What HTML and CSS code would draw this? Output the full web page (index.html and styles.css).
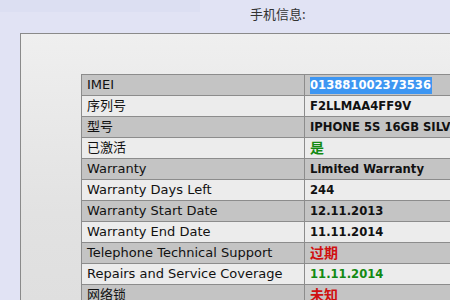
FILE: index.html
```html
<!DOCTYPE html>
<html>
<head>
<meta charset="utf-8">
<link rel="stylesheet" href="styles.css">
</head>
<body>
<div class="page">
  <div class="topband"></div>
  <div class="title">手机信息:</div>
  <div class="panel">
    <table class="info">
      <tr class="dark"><td class="k">IMEI</td><td class="v"><span class="sel">013881002373536</span></td></tr>
      <tr class="light"><td class="k">序列号</td><td class="v">F2LLMAA4FF9V</td></tr>
      <tr class="dark"><td class="k">型号</td><td class="v">IPHONE 5S 16GB SILVER</td></tr>
      <tr class="light"><td class="k">已激活</td><td class="v green cjk">是</td></tr>
      <tr class="dark"><td class="k">Warranty</td><td class="v">Limited Warranty</td></tr>
      <tr class="light"><td class="k">Warranty Days Left</td><td class="v">244</td></tr>
      <tr class="dark"><td class="k">Warranty Start Date</td><td class="v">12.11.2013</td></tr>
      <tr class="light"><td class="k">Warranty End Date</td><td class="v">11.11.2014</td></tr>
      <tr class="dark"><td class="k">Telephone Technical Support</td><td class="v red cjk">过期</td></tr>
      <tr class="light"><td class="k">Repairs and Service Coverage</td><td class="v green">11.11.2014</td></tr>
      <tr class="dark"><td class="k">网络锁</td><td class="v red cjk">未知</td></tr>
    </table>
  </div>
</div>
</body>
</html>
```
FILE: styles.css
```css
html, body {
  margin: 0;
  padding: 0;
  width: 450px;
  height: 300px;
  overflow: hidden;
  background: #e1e3f4;
}
.page {
  position: relative;
  width: 450px;
  height: 300px;
  font-family: "DejaVu Sans", "Noto Sans CJK SC", sans-serif;
}
.topband {
  position: absolute;
  left: 0;
  top: 0;
  width: 200px;
  height: 12px;
  background: #dcdff2;
}
.title {
  position: relative;
  height: 33px;
  box-sizing: border-box;
  padding-top: 6px;
  padding-left: 250px;
  font-size: 13px;
  color: #333;
  font-family: "Noto Sans CJK SC", sans-serif;
  line-height: 16px;
}
.panel {
  margin-left: 20px;
  width: 460px;
  height: 300px;
  border: 1px solid #8a8a8a;
  background: linear-gradient(to bottom, #efefef, #e2e2e2 60%, #dedede);
  box-sizing: border-box;
  padding: 40px 0 0 60px;
}
.info {
  border-collapse: collapse;
  border: 1px solid #888;
  width: 420px;
  font-size: 13px;
  color: #111;
}
.info td {
  border: 1px solid #8c8c8c;
  height: 21px;
  padding: 0 5px;
  box-sizing: border-box;
  white-space: nowrap;
  line-height: 20px;
}
.info td.k {
  width: 223px;
}
.info td.v {
  font-weight: bold;
  font-size: 11.6px;
}
.info td.v.cjk {
  font-size: 14px;
}
.dark td { background: #c4c4c4; }
.light td { background: #ececec; }
.sel {
  background: #3d96f2;
  color: #fff;
  display: inline-block;
  padding: 0 1px 0 0;
  line-height: 17px;
}
.green { color: #138a13; }
.red { color: #d01010; }
```
